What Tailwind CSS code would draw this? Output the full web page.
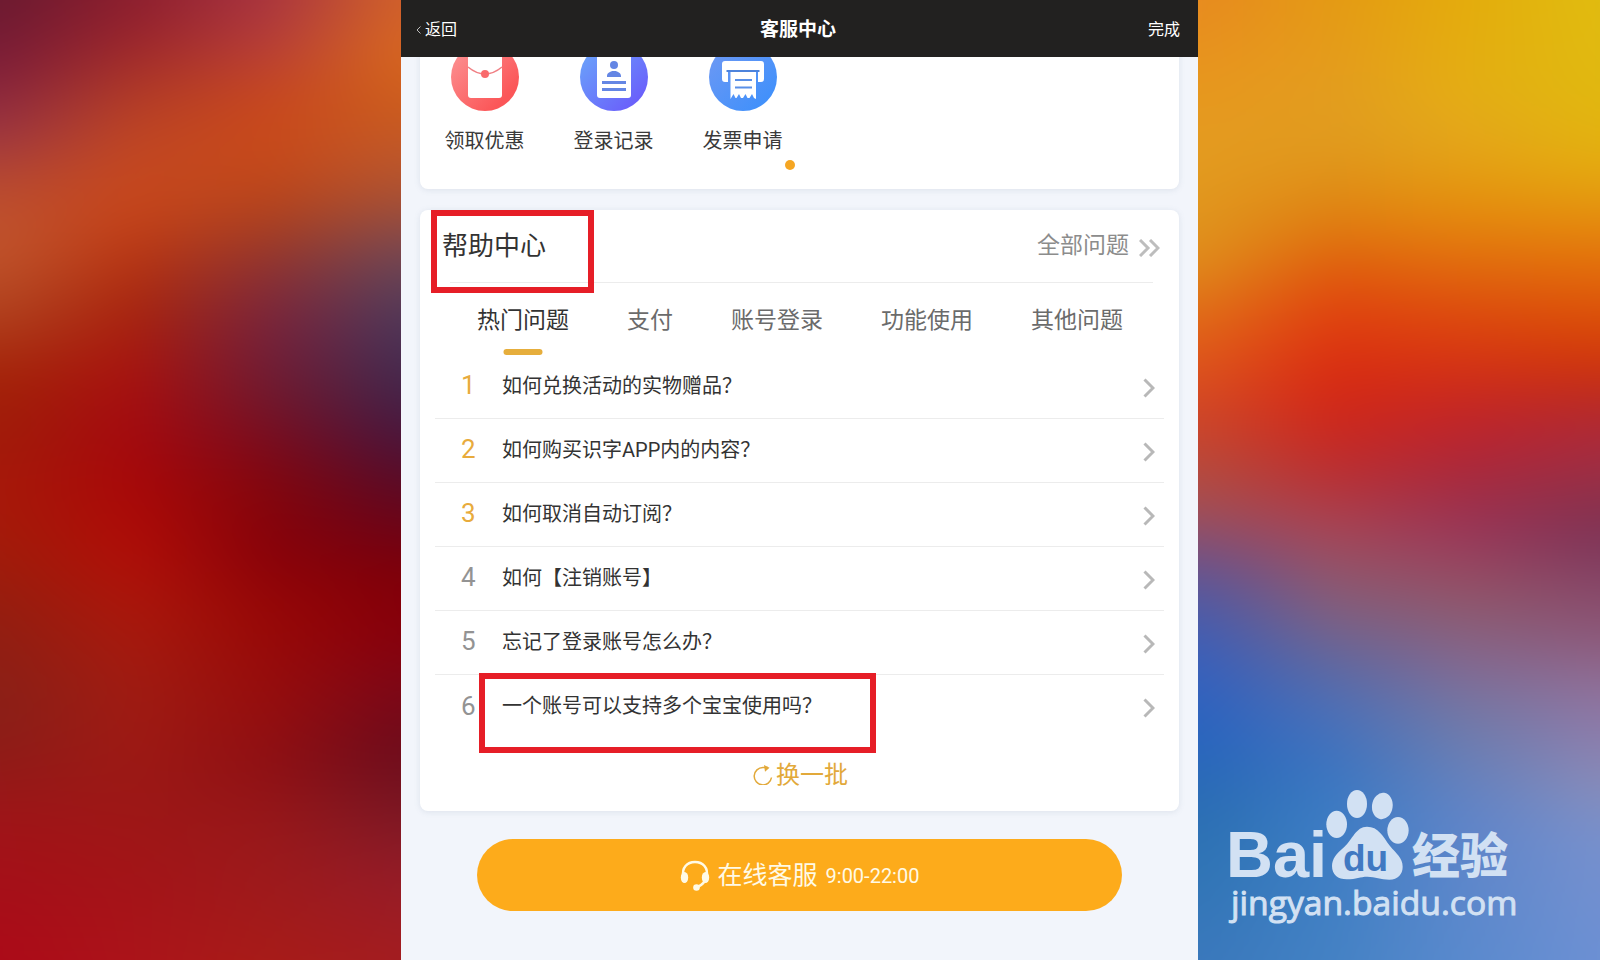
<!DOCTYPE html>
<html lang="zh-CN">

<head>
  <meta charset="UTF-8">
  <meta name="viewport" content="width=device-width, initial-scale=1.0">
  <title>客服中心</title>
  <script src="https://cdn.jsdelivr.net/npm/@tailwindcss/browser@4"></script>
  <style>
    :root {
      font-family: Roboto, 'Noto Sans CJK SC', sans-serif;
    }
  </style>
</head>

<body class="grid grid-cols-[401fr_797fr_402fr] min-h-screen overflow-hidden bg-[#8a1a20]">

  <!-- left wallpaper: four colour columns faded into each other -->
  <div class="relative overflow-hidden">
    <svg class="absolute -top-20 -left-20 w-[calc(100%+160px)] h-[calc(100%+160px)] max-w-none blur-[24px]" viewBox="-0.6 -131 4.2 1830" preserveAspectRatio="none" aria-hidden="true">
      <defs>
        <linearGradient id="l0" gradientUnits="userSpaceOnUse" x1="0" y1="0" x2="0" y2="1568">
          <stop offset="0" stop-color="#6a1a30" /><stop offset=".064" stop-color="#7d1d38" /><stop offset=".14" stop-color="#9c3642" />
          <stop offset=".19" stop-color="#b94a30" /><stop offset=".255" stop-color="#c2552c" /><stop offset=".32" stop-color="#b24420" />
          <stop offset=".395" stop-color="#a42208" /><stop offset=".446" stop-color="#a01c0a" /><stop offset=".51" stop-color="#a8180a" />
          <stop offset=".574" stop-color="#a21c0a" /><stop offset=".638" stop-color="#941e10" /><stop offset=".733" stop-color="#8a2018" />
          <stop offset=".784" stop-color="#8e1c18" /><stop offset=".86" stop-color="#a01418" /><stop offset="1" stop-color="#ac0a18" />
        </linearGradient>
        <linearGradient id="l1" gradientUnits="userSpaceOnUse" x1="0" y1="0" x2="0" y2="1568">
          <stop offset="0" stop-color="#8c1e2e" /><stop offset=".045" stop-color="#9c262c" /><stop offset=".096" stop-color="#b03a28" />
          <stop offset=".147" stop-color="#c04724" /><stop offset=".21" stop-color="#c8481c" /><stop offset=".268" stop-color="#b83614" />
          <stop offset=".32" stop-color="#a8260f" /><stop offset=".383" stop-color="#a81410" /><stop offset=".446" stop-color="#a40a10" />
          <stop offset=".51" stop-color="#a80808" /><stop offset=".574" stop-color="#b00e08" /><stop offset=".638" stop-color="#aa180c" />
          <stop offset=".714" stop-color="#a01c12" /><stop offset=".83" stop-color="#9c1816" /><stop offset=".925" stop-color="#a41418" /><stop offset="1" stop-color="#ac141a" />
        </linearGradient>
        <linearGradient id="l2" gradientUnits="userSpaceOnUse" x1="0" y1="0" x2="0" y2="1568">
          <stop offset="0" stop-color="#a83440" /><stop offset=".051" stop-color="#b83f38" /><stop offset=".102" stop-color="#c8481e" />
          <stop offset=".16" stop-color="#c84a1a" /><stop offset=".21" stop-color="#b8451c" /><stop offset=".255" stop-color="#9c3a28" />
          <stop offset=".3" stop-color="#842c38" /><stop offset=".357" stop-color="#74203a" /><stop offset=".408" stop-color="#701a2e" />
          <stop offset=".46" stop-color="#7a0c1e" /><stop offset=".51" stop-color="#84060c" /><stop offset=".574" stop-color="#88020a" />
          <stop offset=".638" stop-color="#980806" /><stop offset=".733" stop-color="#960e0e" /><stop offset=".797" stop-color="#8e1014" />
          <stop offset=".86" stop-color="#98181a" /><stop offset=".925" stop-color="#9e1a1c" /><stop offset="1" stop-color="#a81c18" />
        </linearGradient>
        <linearGradient id="l3" gradientUnits="userSpaceOnUse" x1="0" y1="0" x2="0" y2="1568">
          <stop offset="0" stop-color="#d0602c" /><stop offset=".051" stop-color="#d86820" /><stop offset=".108" stop-color="#cc5c1c" />
          <stop offset=".16" stop-color="#c0582a" /><stop offset=".21" stop-color="#a85034" /><stop offset=".255" stop-color="#7c4850" />
          <stop offset=".3" stop-color="#5c4058" /><stop offset=".344" stop-color="#4c3458" /><stop offset=".395" stop-color="#44284c" />
          <stop offset=".446" stop-color="#481840" /><stop offset=".497" stop-color="#580c28" /><stop offset=".548" stop-color="#6c0418" />
          <stop offset=".6" stop-color="#800008" /><stop offset=".663" stop-color="#88000c" /><stop offset=".72" stop-color="#7c0818" />
          <stop offset=".784" stop-color="#6c0c1c" /><stop offset=".848" stop-color="#7c1824" /><stop offset=".912" stop-color="#941c28" /><stop offset="1" stop-color="#a41c20" />
        </linearGradient>
        <linearGradient id="f1" gradientUnits="userSpaceOnUse" x1="0" y1="0" x2="1" y2="0"><stop offset="0" stop-color="#000" /><stop offset="1" stop-color="#fff" /></linearGradient>
        <linearGradient id="f2" gradientUnits="userSpaceOnUse" x1="1" y1="0" x2="2" y2="0"><stop offset="0" stop-color="#000" /><stop offset="1" stop-color="#fff" /></linearGradient>
        <linearGradient id="f3" gradientUnits="userSpaceOnUse" x1="2" y1="0" x2="3" y2="0"><stop offset="0" stop-color="#000" /><stop offset="1" stop-color="#fff" /></linearGradient>
        <mask id="m1" maskUnits="userSpaceOnUse" x="-1" y="-200" width="5" height="2000"><rect x="-1" y="-200" width="5" height="2000" fill="url(#f1)" /></mask>
        <mask id="m2" maskUnits="userSpaceOnUse" x="-1" y="-200" width="5" height="2000"><rect x="-1" y="-200" width="5" height="2000" fill="url(#f2)" /></mask>
        <mask id="m3" maskUnits="userSpaceOnUse" x="-1" y="-200" width="5" height="2000"><rect x="-1" y="-200" width="5" height="2000" fill="url(#f3)" /></mask>
      </defs>
      <rect x="-1" y="-200" width="5" height="2000" fill="url(#l0)" />
      <rect x="-1" y="-200" width="5" height="2000" fill="url(#l1)" mask="url(#m1)" />
      <rect x="-1" y="-200" width="5" height="2000" fill="url(#l2)" mask="url(#m2)" />
      <rect x="-1" y="-200" width="5" height="2000" fill="url(#l3)" mask="url(#m3)" />
    </svg>
  </div>

  <main class="relative flex flex-col bg-[#f2f5fb]">
    <header class="relative z-10 grid grid-cols-3 items-center h-[57px] pt-[3px] pl-[15px] pr-[18px] bg-[#222120] text-white">
      <a href="#" class="flex items-center gap-1 text-base">
        <svg class="w-[5px] h-2" viewBox="0 0 5 8" fill="none" stroke="#bbb" stroke-width="1"><path d="M4.5 .5 1 4l3.500 3.500" /></svg>返回
      </a>
      <h1 class="text-center text-[19px] font-bold">客服中心</h1>
      <button class="justify-self-end text-base">完成</button>
    </header>

    <div class="px-[19px]">
      <!-- services, scrolled partly under the header -->
      <section class="-mt-[26px] pt-3 pb-[19px] bg-white rounded-lg shadow-[0_1px_6px_rgba(90,110,140,0.14)]">
        <div class="flex text-xl leading-7 text-[#3a3a3a]">
          <a href="#" class="w-[129px] flex flex-col items-center gap-4">
            <svg class="size-[68px]" viewBox="0 0 68 68">
              <defs><linearGradient id="red" x1="0" y1="0" x2="1" y2="1"><stop offset=".1" stop-color="#fc8f90" /><stop offset=".8" stop-color="#fb5658" /></linearGradient></defs>
              <circle cx="34" cy="34" r="34" fill="url(#red)" />
              <rect x="17" y="8" width="34" height="47" rx="3" fill="#fff" />
              <path d="M17 24q17 14 34 0" fill="none" stroke="#f08085" stroke-width="1.600" />
              <circle cx="34" cy="31" r="4" fill="#f96a6c" />
            </svg>领取优惠
          </a>
          <a href="#" class="w-[129px] flex flex-col items-center gap-4">
            <svg class="size-[68px]" viewBox="0 0 68 68">
              <defs><linearGradient id="violet" x1="0" y1="0" x2="1" y2="1"><stop offset=".15" stop-color="#6a9dfa" /><stop offset=".9" stop-color="#6a5cfb" /></linearGradient></defs>
              <circle cx="34" cy="34" r="34" fill="url(#violet)" />
              <rect x="17" y="8" width="34" height="47" rx="3" fill="#fff" />
              <circle cx="34" cy="22" r="4" fill="#6486e4" />
              <path d="M27 34v-1c0-3 3-4 5-5h4c2 1 5 2 5 5v1z" fill="#6486e4" />
              <path d="M22 39.500h24M22 46.500h24" stroke="#6486e4" stroke-width="3" />
            </svg>登录记录
          </a>
          <a href="#" class="w-[129px] flex flex-col items-center gap-4">
            <svg class="size-[68px]" viewBox="0 0 68 68">
              <defs><linearGradient id="blue" x1="0" y1="0" x2="1" y2="1"><stop offset=".1" stop-color="#6b98f4" /><stop offset=".9" stop-color="#3f90fb" /></linearGradient></defs>
              <circle cx="34" cy="34" r="34" fill="url(#blue)" />
              <path d="M16 18h36q3 0 3 3v15q0 3-3 3h-3V29H19v10h-3q-3 0-3-3V21q0-3 3-3z" fill="#fff" />
              <path d="M17.500 28h33" stroke="#4d83dc" stroke-width="2" />
              <path d="M21.500 29h25.500v27l-2-1-2-4-2.500 4h-2l-2-4-2.500 4h-2l-2-4-2.500 4h-1l-2-4-3 5z" fill="#fff" />
              <path d="M26 37h17M26 44.500h17" stroke="#5a90e8" stroke-width="2" />
            </svg>发票申请
          </a>
        </div>
        <div class="mt-[5px] flex justify-center gap-[10px]">
          <span class="size-[10px] rounded-full bg-[#f5a623]"></span>
          <span class="size-[10px] rounded-full bg-white"></span>
        </div>
      </section>

      <section class="mt-[21px] bg-white rounded-lg shadow-[0_1px_6px_rgba(90,110,140,0.14)]">
        <div class="relative flex items-center justify-between h-[72px] pl-[22px] pr-[19px]">
          <h2 class="text-[26px] text-[#333]">帮助中心</h2>
          <a href="#" class="flex items-center gap-[10px] text-[23px] text-[#8c8c8c]">全部问题
            <svg class="w-[21px] h-[18px] mt-1" viewBox="0 0 21 18" fill="none" stroke="#bdbdbd" stroke-width="3"><path d="m1 1 8 8-8 8M11 1l8 8-8 8" /></svg>
          </a>
          <span class="absolute top-0 left-[11px] w-[163px] h-[83px] border-[6px] border-[#e61e27]"></span>
        </div>
        <hr class="ml-[30px] mr-[26px] border-[#ececec]">

        <nav class="flex h-[72px] gap-[58px] pl-[57px] text-[23px] text-[#6b6b6b] whitespace-nowrap">
          <button class="relative pt-1 text-[#333]">热门问题
            <span class="absolute bottom-0 left-1/2 -translate-x-1/2 w-[39px] h-[6px] rounded-full bg-[#e6ae3c]"></span>
          </button>
          <button class="pt-1">支付</button>
          <button class="pt-1">账号登录</button>
          <button class="pt-1">功能使用</button>
          <button class="pt-1">其他问题</button>
        </nav>

        <ol id="questions" class="mx-[15px] text-xl text-[#333]"></ol>

        <div class="flex items-center justify-center h-[72px]">
          <button class="flex items-center gap-[3px] ml-[2px] text-2xl text-[#e2a93a]">
            <svg class="size-[20px]" viewBox="0 0 20 20" fill="none" stroke="#e2a93a" stroke-width="1.500"><path d="M18.500 12.500A8.700 8.700 0 1 1 10 2.500h5" /><path d="m11 0 5.500 2.700-4.500 4z" fill="#e2a93a" stroke="none" /></svg>换一批
          </button>
        </div>
      </section>

      <div class="px-[57px] pt-[28px]">
        <button class="flex items-center justify-center w-full h-[72px] rounded-full bg-[#fdab1b] text-[#fffae6]">
          <svg class="w-[30px] h-[31px] mr-2" viewBox="0 0 30 31" fill="none" stroke="#fffae6">
            <path d="M3.500 16C1.500 8 7 2 15 2s13.500 6 11.500 14c-1 5-4 9-9 11" stroke-width="2.500" />
            <ellipse cx="4.500" cy="17.500" rx="3.700" ry="5.500" fill="#fffae6" stroke="none" />
            <ellipse cx="25.500" cy="17.500" rx="3.700" ry="5.500" fill="#fffae6" stroke="none" />
            <circle cx="16.500" cy="27.500" r="3.300" fill="#fffae6" stroke="none" />
          </svg>
          <span class="pt-[2px] text-[25px]">在线客服</span>
          <span class="pt-[2px] ml-2 text-xl">9:00-22:00</span>
        </button>
      </div>
    </div>
  </main>

  <!-- right wallpaper and watermark -->
  <div class="relative overflow-hidden">
    <svg class="absolute -top-20 -left-20 w-[calc(100%+160px)] h-[calc(100%+160px)] max-w-none blur-[24px]" viewBox="-0.6 -131 4.2 1830" preserveAspectRatio="none" aria-hidden="true">
      <defs>
        <linearGradient id="r0" gradientUnits="userSpaceOnUse" x1="0" y1="0" x2="0" y2="1568">
          <stop offset="0" stop-color="#e88a20" /><stop offset=".077" stop-color="#e8961e" /><stop offset=".16" stop-color="#e49c20" />
          <stop offset=".223" stop-color="#e0961e" /><stop offset=".274" stop-color="#e08c1c" /><stop offset=".32" stop-color="#e07018" />
          <stop offset=".37" stop-color="#e0581a" /><stop offset=".434" stop-color="#d04428" /><stop offset=".485" stop-color="#b84a3a" />
          <stop offset=".536" stop-color="#a05058" /><stop offset=".574" stop-color="#785080" /><stop offset=".625" stop-color="#505aa4" />
          <stop offset=".69" stop-color="#3860bc" /><stop offset=".765" stop-color="#2864c0" /><stop offset=".83" stop-color="#2a6cb4" />
          <stop offset=".893" stop-color="#2e74b4" /><stop offset="1" stop-color="#3a78bc" />
        </linearGradient>
        <linearGradient id="r1" gradientUnits="userSpaceOnUse" x1="0" y1="0" x2="0" y2="1568">
          <stop offset="0" stop-color="#e49a14" /><stop offset=".077" stop-color="#e49c1e" /><stop offset=".14" stop-color="#e09c20" />
          <stop offset=".19" stop-color="#e09018" /><stop offset=".242" stop-color="#e07810" /><stop offset=".287" stop-color="#e0580e" />
          <stop offset=".332" stop-color="#e04010" /><stop offset=".395" stop-color="#d82a12" /><stop offset=".446" stop-color="#cc281e" />
          <stop offset=".497" stop-color="#b83034" /><stop offset=".548" stop-color="#a84454" /><stop offset=".593" stop-color="#945468" />
          <stop offset=".638" stop-color="#806080" /><stop offset=".69" stop-color="#6068a0" /><stop offset=".74" stop-color="#4c70b8" />
          <stop offset=".797" stop-color="#3c74c0" /><stop offset=".848" stop-color="#3c7cc4" /><stop offset="1" stop-color="#4482c4" />
        </linearGradient>
        <linearGradient id="r2" gradientUnits="userSpaceOnUse" x1="0" y1="0" x2="0" y2="1568">
          <stop offset="0" stop-color="#e4ac0c" /><stop offset=".096" stop-color="#e4ae14" /><stop offset=".147" stop-color="#e4a61c" />
          <stop offset=".19" stop-color="#e49a10" /><stop offset=".242" stop-color="#e4800e" /><stop offset=".287" stop-color="#e0640e" />
          <stop offset=".332" stop-color="#dc480e" /><stop offset=".37" stop-color="#d83812" /><stop offset=".415" stop-color="#c82820" />
          <stop offset=".46" stop-color="#b82432" /><stop offset=".504" stop-color="#a42c40" /><stop offset=".548" stop-color="#983458" />
          <stop offset=".593" stop-color="#984860" /><stop offset=".638" stop-color="#8c5c70" /><stop offset=".69" stop-color="#846890" />
          <stop offset=".74" stop-color="#7478a4" /><stop offset=".797" stop-color="#6880b8" /><stop offset=".848" stop-color="#6084c8" />
          <stop offset="1" stop-color="#5a8ace" />
        </linearGradient>
        <linearGradient id="r3" gradientUnits="userSpaceOnUse" x1="0" y1="0" x2="0" y2="1568">
          <stop offset="0" stop-color="#e0bc10" /><stop offset=".096" stop-color="#e0b810" /><stop offset=".16" stop-color="#e4b010" />
          <stop offset=".204" stop-color="#e49c10" /><stop offset=".255" stop-color="#e47c0c" /><stop offset=".3" stop-color="#e0600c" />
          <stop offset=".344" stop-color="#d84808" /><stop offset=".389" stop-color="#cc3010" /><stop offset=".434" stop-color="#b02830" />
          <stop offset=".472" stop-color="#a82c40" /><stop offset=".51" stop-color="#903048" /><stop offset=".561" stop-color="#7c3458" />
          <stop offset=".612" stop-color="#884868" /><stop offset=".663" stop-color="#8c5878" /><stop offset=".714" stop-color="#907098" />
          <stop offset=".765" stop-color="#8c7cac" /><stop offset=".816" stop-color="#888cb8" /><stop offset=".867" stop-color="#7890cc" />
          <stop offset="1" stop-color="#6c90d4" />
        </linearGradient>
      </defs>
      <rect x="-1" y="-200" width="5" height="2000" fill="url(#r0)" />
      <rect x="-1" y="-200" width="5" height="2000" fill="url(#r1)" mask="url(#m1)" />
      <rect x="-1" y="-200" width="5" height="2000" fill="url(#r2)" mask="url(#m2)" />
      <rect x="-1" y="-200" width="5" height="2000" fill="url(#r3)" mask="url(#m3)" />
    </svg>

    <svg class="absolute right-[74px] bottom-[20px] w-[300px] h-[154px]" viewBox="48 48 900 462" fill="#d2e1f3">
      <ellipse cx="380" cy="163" rx="31" ry="41" />
      <ellipse cx="441" cy="102" rx="30" ry="42" />
      <ellipse cx="517" cy="108" rx="31" ry="40" transform="rotate(8 517 108)" />
      <ellipse cx="564" cy="181" rx="32" ry="40" />
      <path d="M471 170C438 170 428 208 402 232C378 252 366 268 366 288C366 314 384 328 410 328C440 328 450 320 472 320C496 320 512 329 538 329C564 329 578 312 578 290C578 264 558 250 540 228C518 198 505 170 471 170Z" />
      <text x="48" y="322" font-family="Liberation Sans" font-weight="700" font-size="195">Bai</text>
      <text x="399" y="302" font-family="Liberation Sans" font-weight="700" font-size="111" fill="#4179c2">du</text>
      <text x="606" y="310" font-family="Noto Sans CJK SC" font-weight="900" font-size="144">经验</text>
      <text x="63" y="436" font-family="Open Sans" font-size="101" stroke="#d2e1f3" stroke-width="3">jingyan.baidu.com</text>
    </svg>
  </div>

</body>
<script>
  const questions = [
    '如何兑换活动的实物赠品？',
    '如何购买识字APP内的内容？',
    '如何取消自动订阅？',
    '如何【注销账号】',
    '忘记了登录账号怎么办？',
    '一个账号可以支持多个宝宝使用吗？',
  ]

  const list = document.getElementById('questions')

  questions.forEach((text, i) => {
    const item = document.createElement('li')
    item.className = 'relative h-16 border-b border-[#ececec] last:border-b-0'
    const color = i < 3 ? 'text-[#e8ab3c]' : 'text-[#939393]'
    item.innerHTML = `
      <a href="#" class="flex items-center h-full pb-[2px] pl-[26px] pr-[9px]">
        <span class="w-[41px] text-[26px] ${color}">${i + 1}</span>
        <span class="grow">${text}</span>
        <svg class="w-3 h-5 mt-1" viewBox="0 0 12 20" fill="none" stroke="#b8b8b8" stroke-width="3"><path d="m1.500 1.500 8.500 8.500-8.500 8.500" /></svg>
      </a>
    `
    list.appendChild(item)
  })

  // highlight round the last question
  list.lastElementChild.insertAdjacentHTML('beforeend',
    '<span class="absolute -top-[2px] left-[44px] w-[397px] h-20 border-[6px] border-[#e61e27]"></span>')
</script>

</html>
